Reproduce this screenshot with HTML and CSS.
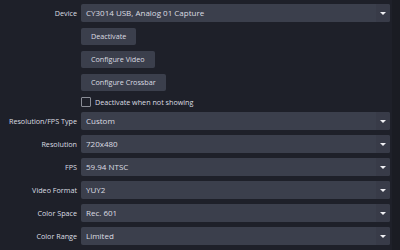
FILE: index.html
```html
<!DOCTYPE html>
<html>
<head>
<meta charset="utf-8">
<link rel="stylesheet" href="styles.css">
</head>
<body>
<div class="page">
  <div class="form">
    <div class="row top">
      <div class="label">Device</div>
      <div class="combo"><span class="val">CY3014 USB, Analog 01 Capture</span><span class="arrow"></span></div>
    </div>
    <div class="row btnrow"><div class="label"></div><button class="btn">Deactivate</button></div>
    <div class="row btnrow"><div class="label"></div><button class="btn">Configure Video</button></div>
    <div class="row btnrow"><div class="label"></div><button class="btn">Configure Crossbar</button></div>
    <div class="row checkrow"><div class="label"></div><label class="check"><span class="box"></span>Deactivate when not showing</label></div>
    <div class="list">
      <div class="row"><div class="label">Resolution/FPS Type</div><div class="combo"><span class="val">Custom</span><span class="arrow"></span></div></div>
      <div class="row"><div class="label">Resolution</div><div class="combo"><span class="val">720x480</span><span class="arrow"></span></div></div>
      <div class="row"><div class="label">FPS</div><div class="combo"><span class="val">59.94 NTSC</span><span class="arrow"></span></div></div>
      <div class="row"><div class="label">Video Format</div><div class="combo"><span class="val">YUY2</span><span class="arrow"></span></div></div>
      <div class="row"><div class="label">Color Space</div><div class="combo"><span class="val">Rec. 601</span><span class="arrow"></span></div></div>
      <div class="row"><div class="label">Color Range</div><div class="combo"><span class="val">Limited</span><span class="arrow"></span></div></div>
    </div>
  </div>
  <div class="edge"></div>
</div>
</body>
</html>
```
FILE: styles.css
```css
html, body {
  margin: 0;
  padding: 0;
  background: #1e2029;
  width: 400px;
  height: 250px;
  overflow: hidden;
}
body {
  font-family: "Open Sans", "Noto Sans", sans-serif;
  font-size: 7.2px;
  line-height: 10px;
  color: #dcdde2;
}
.page {
  display: flex;
  height: 250px;
}
.form {
  flex: 1;
  display: flex;
  flex-direction: column;
  gap: 6px;
  padding: 4px 2px 0 0;
}
.row {
  display: flex;
  align-items: center;
  gap: 4px;
  height: 18px;
}
.btnrow {
  height: 17px;
}
.label {
  width: 77px;
  flex: none;
  text-align: right;
  white-space: nowrap;
}
.combo {
  flex: 1;
  height: 18px;
  background: #3b3f4c;
  border-radius: 2px;
  display: flex;
  align-items: center;
  justify-content: space-between;
}
.val {
  padding-left: 5px;
  font-size: 8px;
}
.arrow {
  width: 14px;
  height: 18px;
  background: #383b48;
  border-radius: 0 2px 2px 0;
  display: flex;
  align-items: center;
  justify-content: center;
}
.arrow::after {
  content: "";
  width: 0;
  height: 0;
  border-left: 3px solid transparent;
  border-right: 3px solid transparent;
  border-top: 3px solid #f0f0f4;
}
.btn {
  height: 17px;
  padding: 0 10px;
  background: #3b3f4c;
  border: none;
  border-radius: 2px;
  color: #dcdde2;
  font-family: inherit;
  font-size: 7.2px;
  line-height: 17px;
}
.checkrow {
  height: 10px;
}
.check {
  display: flex;
  align-items: center;
  gap: 4px;
}
.box {
  width: 8px;
  height: 8px;
  border: 1px solid #8a8d96;
  border-radius: 1px;
}
.list {
  display: flex;
  flex-direction: column;
  gap: 5px;
  margin-top: -1px;
}
.edge {
  width: 8px;
  background: #1a1c23;
}
```
